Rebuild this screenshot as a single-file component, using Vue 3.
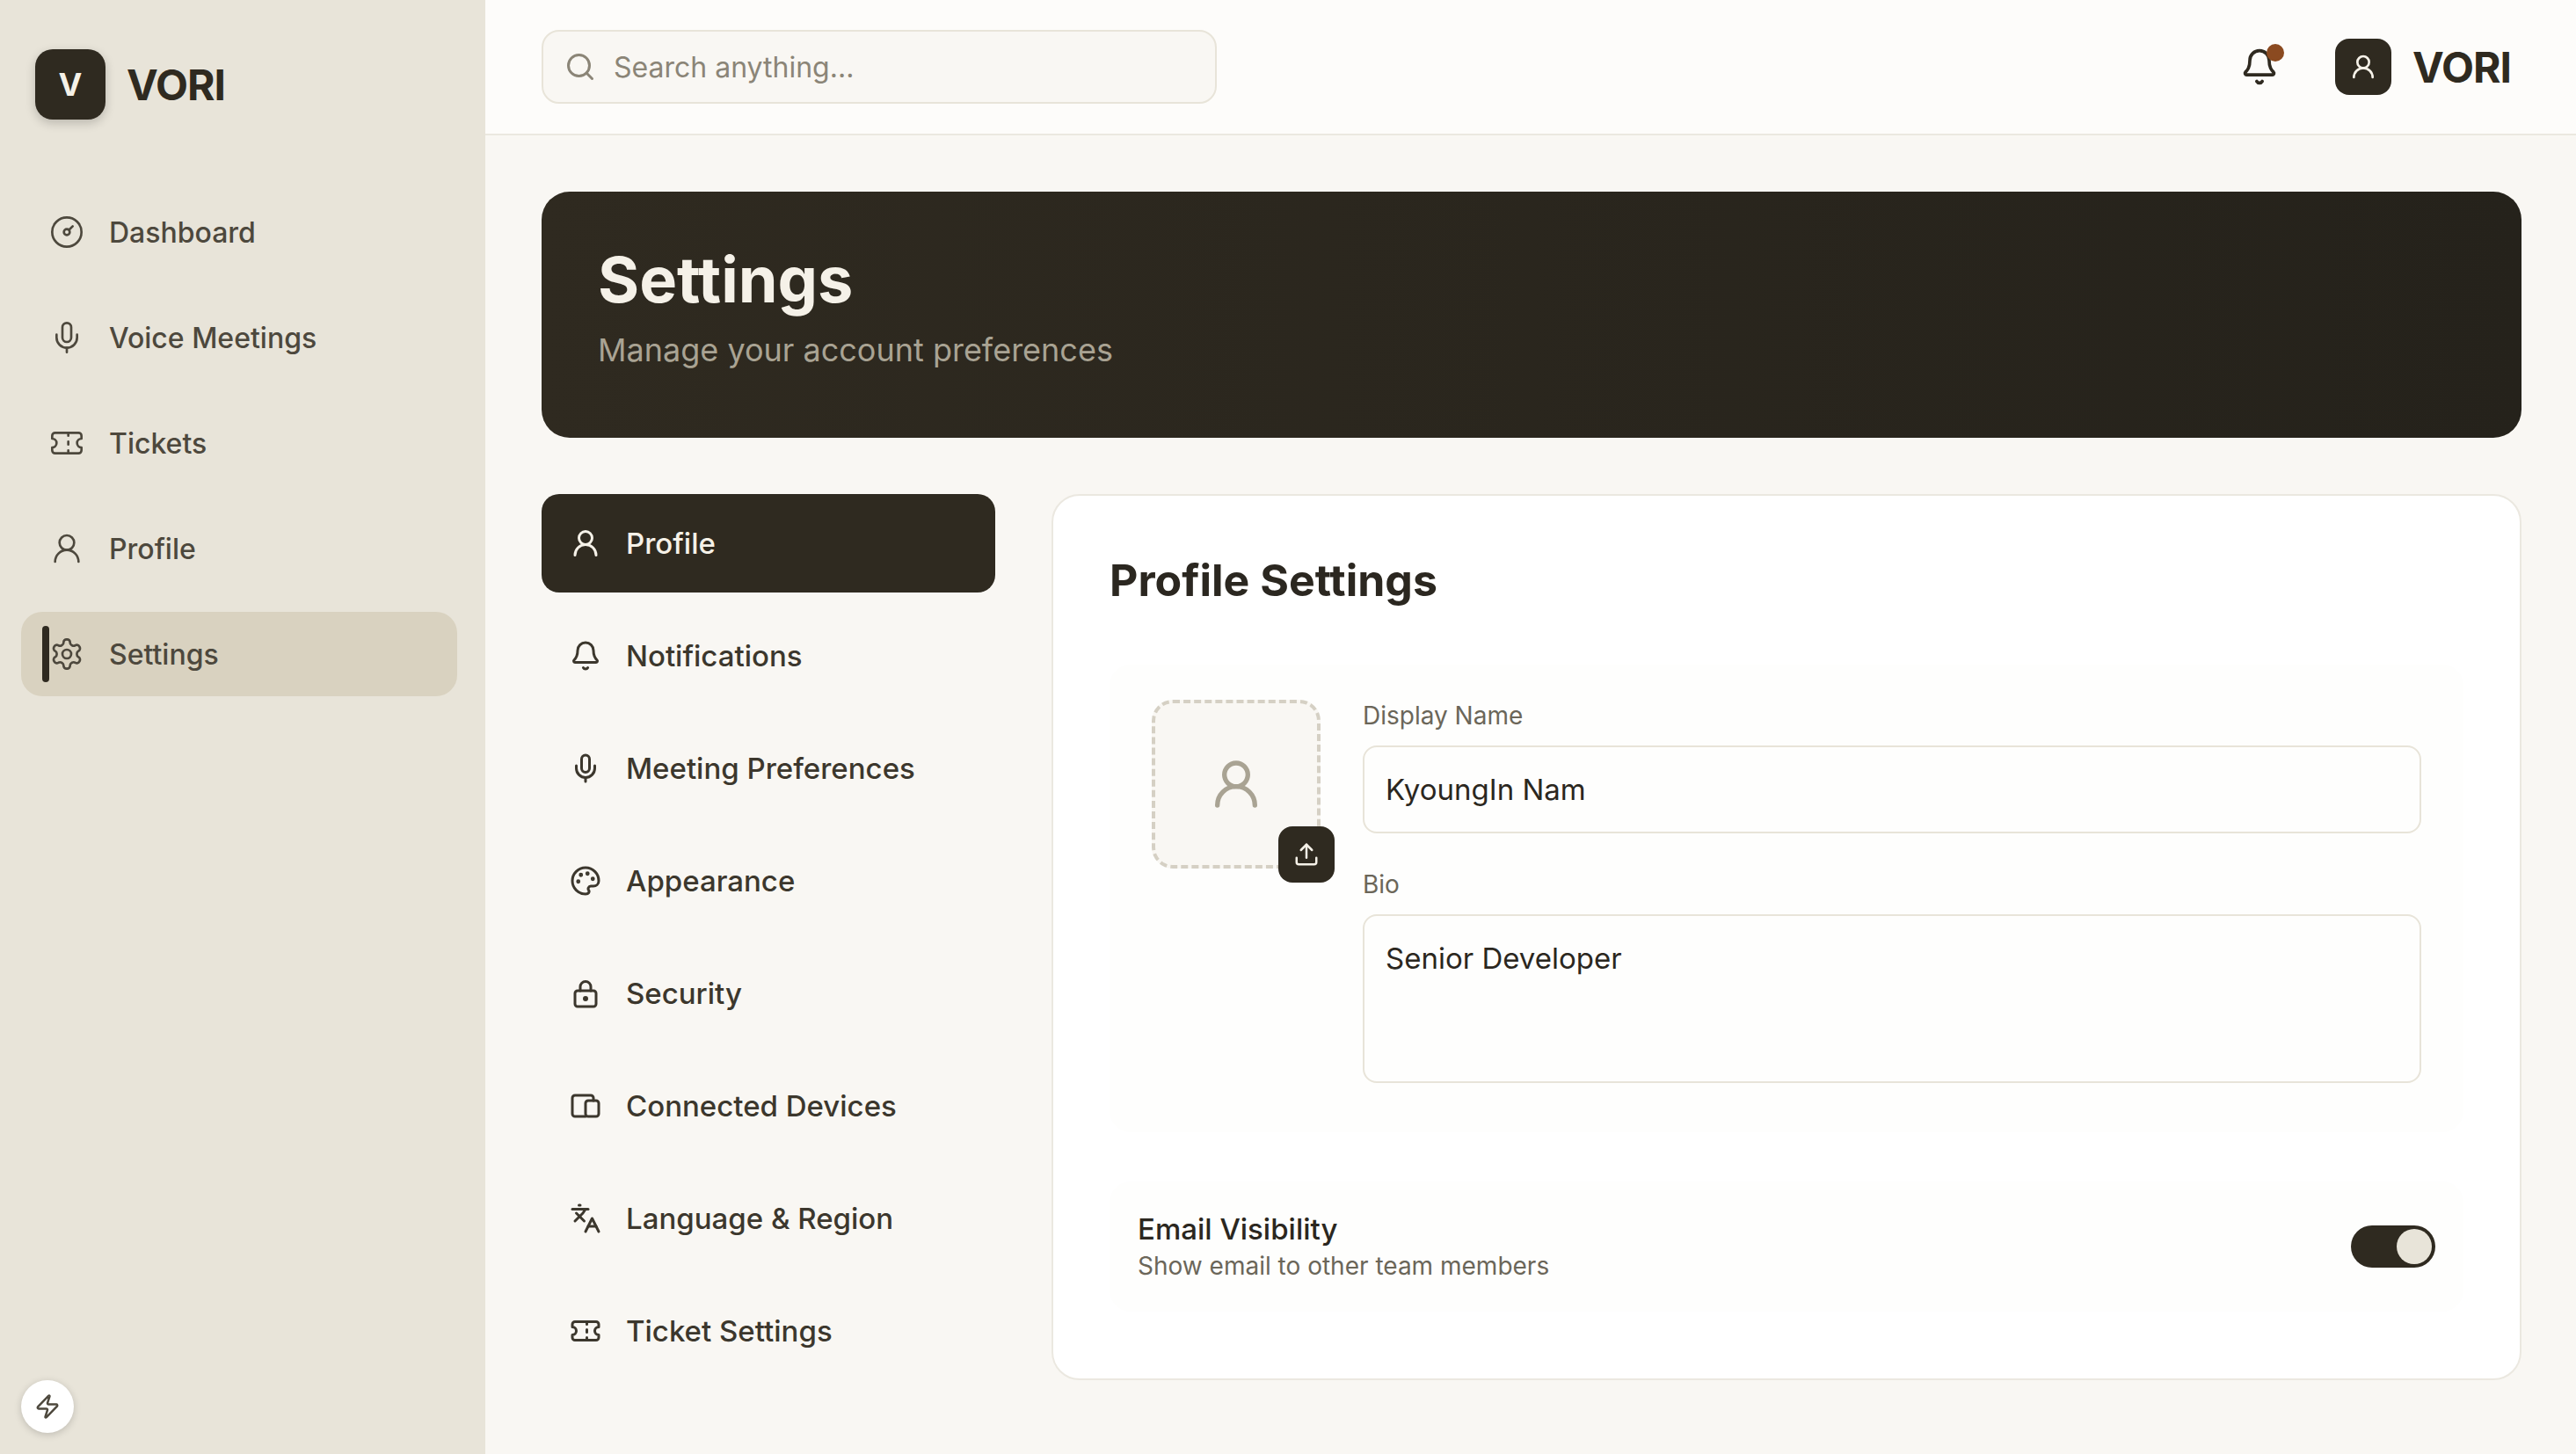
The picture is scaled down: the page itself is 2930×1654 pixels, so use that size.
<template>
  <div class="app">
    <aside class="sidebar">
      <div class="brand">
        <div class="brand-mark">V</div>
        <span class="brand-name">VORI</span>
      </div>
      <nav class="side-nav">
        <a v-for="item in sideItems" :key="item.label" class="side-item" :class="{ active: item.label === 'Settings' }">
          <span v-if="item.label === 'Settings'" class="side-bar"></span>
          <svg class="side-icon" viewBox="0 0 24 24" v-html="icons[item.icon]"></svg>
          <span>{{ item.label }}</span>
        </a>
      </nav>
      <button class="bolt">
        <svg viewBox="0 0 24 24" v-html="icons.bolt"></svg>
      </button>
    </aside>
    <div class="main">
      <header class="topbar">
        <div class="search">
          <svg viewBox="0 0 24 24" v-html="icons.search"></svg>
          <span>Search anything...</span>
        </div>
        <div class="top-right">
          <div class="bell">
            <svg viewBox="0 0 24 24" v-html="icons.bell"></svg>
            <span class="dot"></span>
          </div>
          <div class="user">
            <div class="user-mark"><svg viewBox="0 0 24 24" v-html="icons.user"></svg></div>
            <span>VORI</span>
          </div>
        </div>
      </header>
      <main class="content">
        <section class="hero">
          <h1>Settings</h1>
          <p>Manage your account preferences</p>
        </section>
        <div class="columns">
          <nav class="tabs">
            <a v-for="(tab, i) in tabs" :key="tab.label" class="tab" :class="{ active: i === 0 }">
              <svg viewBox="0 0 24 24" v-html="icons[tab.icon]"></svg>
              <span>{{ tab.label }}</span>
            </a>
          </nav>
          <section class="card">
            <h2>Profile Settings</h2>
            <div class="profile-box">
              <div class="avatar">
                <svg class="avatar-icon" viewBox="0 0 24 24" v-html="icons.user"></svg>
                <button class="upload"><svg viewBox="0 0 24 24" v-html="icons.upload"></svg></button>
              </div>
              <div class="fields">
                <label>Display Name</label>
                <div class="input">KyoungIn Nam</div>
                <label class="bio-label">Bio</label>
                <div class="input textarea">Senior Developer</div>
              </div>
            </div>
            <div class="email-row">
              <div>
                <div class="email-title">Email Visibility</div>
                <div class="email-sub">Show email to other team members</div>
              </div>
              <div class="toggle"><span></span></div>
            </div>
          </section>
        </div>
      </main>
    </div>
  </div>
</template>

<script setup>
const icons = {
  gauge: '<circle cx="12" cy="12" r="10"/><circle cx="12" cy="12" r="2"/><path d="M13.5 10.5 16 8"/>',
  mic: '<path d="M12 2a3 3 0 0 0-3 3v7a3 3 0 0 0 6 0V5a3 3 0 0 0-3-3Z"/><path d="M19 10v2a7 7 0 0 1-14 0v-2"/><path d="M12 19v3"/>',
  ticket: '<path d="M2 9a3 3 0 0 1 0 6v2a2 2 0 0 0 2 2h16a2 2 0 0 0 2-2v-2a3 3 0 0 1 0-6V7a2 2 0 0 0-2-2H4a2 2 0 0 0-2 2Z"/><path d="M13 5v2M13 17v2M13 11v2"/>',
  user: '<circle cx="12" cy="8" r="5"/><path d="M20 21a8 8 0 0 0-16 0"/>',
  gear: '<path d="M12.22 2h-.44a2 2 0 0 0-2 2v.18a2 2 0 0 1-1 1.73l-.43.25a2 2 0 0 1-2 0l-.15-.08a2 2 0 0 0-2.73.73l-.22.38a2 2 0 0 0 .73 2.73l.15.1a2 2 0 0 1 1 1.72v.51a2 2 0 0 1-1 1.74l-.15.09a2 2 0 0 0-.73 2.73l.22.38a2 2 0 0 0 2.73.73l.15-.08a2 2 0 0 1 2 0l.43.25a2 2 0 0 1 1 1.73V20a2 2 0 0 0 2 2h.44a2 2 0 0 0 2-2v-.18a2 2 0 0 1 1-1.73l.43-.25a2 2 0 0 1 2 0l.15.08a2 2 0 0 0 2.73-.73l.22-.39a2 2 0 0 0-.73-2.73l-.15-.08a2 2 0 0 1-1-1.74v-.5a2 2 0 0 1 1-1.74l.15-.09a2 2 0 0 0 .73-2.73l-.22-.38a2 2 0 0 0-2.73-.73l-.15.08a2 2 0 0 1-2 0l-.43-.25a2 2 0 0 1-1-1.73V4a2 2 0 0 0-2-2Z"/><circle cx="12" cy="12" r="3"/>',
  bolt: '<path d="M4 14a1 1 0 0 1-.78-1.63l9.9-10.2a.5.5 0 0 1 .86.46l-1.92 6.02A1 1 0 0 0 13 10h7a1 1 0 0 1 .78 1.63l-9.9 10.2a.5.5 0 0 1-.86-.46l1.92-6.02A1 1 0 0 0 11 14Z"/>',
  search: '<circle cx="11" cy="11" r="8"/><path d="m21 21-4.3-4.3"/>',
  bell: '<path d="M10.27 21a2 2 0 0 0 3.46 0"/><path d="M3.26 15.33A1 1 0 0 0 4 17h16a1 1 0 0 0 .74-1.67C19.41 13.96 18 12.5 18 8A6 6 0 0 0 6 8c0 4.5-1.41 5.96-2.74 7.33"/>',
  palette: '<path d="M12 22a10 10 0 1 1 10-10c0 2.5-2 4-4 4h-2a2 2 0 0 0-1.5 3.3c.5.7.2 2.7-2.5 2.7Z"/><circle cx="13.5" cy="6.5" r=".6" fill="currentColor"/><circle cx="17.5" cy="10.5" r=".6" fill="currentColor"/><circle cx="6.5" cy="12.5" r=".6" fill="currentColor"/><circle cx="8.5" cy="7.5" r=".6" fill="currentColor"/>',
  lock: '<rect x="4" y="10" width="16" height="12" rx="2"/><path d="M8 10V7a4 4 0 0 1 8 0v3"/><circle cx="12" cy="16" r="1" fill="currentColor"/>',
  devices: '<path d="M18 8V6a2 2 0 0 0-2-2H4a2 2 0 0 0-2 2v12a2 2 0 0 0 2 2h8"/><rect x="12" y="8" width="10" height="12" rx="2"/>',
  language: '<path d="m5 8 6 6"/><path d="m4 14 6-6 2-3"/><path d="M2 5h12"/><path d="M7 2h1"/><path d="m22 22-5-10-5 10"/><path d="M14 18h6"/>',
  upload: '<path d="M12 3v12"/><path d="m17 8-5-5-5 5"/><path d="M21 15v4a2 2 0 0 1-2 2H5a2 2 0 0 1-2-2v-4"/>'
}

const sideItems = [
  { label: 'Dashboard', icon: 'gauge' },
  { label: 'Voice Meetings', icon: 'mic' },
  { label: 'Tickets', icon: 'ticket' },
  { label: 'Profile', icon: 'user' },
  { label: 'Settings', icon: 'gear' }
]

const tabs = [
  { label: 'Profile', icon: 'user' },
  { label: 'Notifications', icon: 'bell' },
  { label: 'Meeting Preferences', icon: 'mic' },
  { label: 'Appearance', icon: 'palette' },
  { label: 'Security', icon: 'lock' },
  { label: 'Connected Devices', icon: 'devices' },
  { label: 'Language & Region', icon: 'language' },
  { label: 'Ticket Settings', icon: 'ticket' }
]
</script>

<style>
html, body { margin: 0; background: #f9f7f3; }
</style>

<style scoped>
* { box-sizing: border-box; }
svg { fill: none; stroke: currentColor; stroke-width: 2; stroke-linecap: round; stroke-linejoin: round; display: block; }
.app { display: flex; width: 2930px; height: 1654px; overflow: hidden; font-family: Inter, sans-serif; color: #2b2720; background: #f9f7f3; }
.sidebar { position: relative; width: 552px; flex: none; background: #e8e4d9; padding: 56px 32px 0 24px; }
.brand { display: flex; align-items: center; gap: 24px; padding-left: 16px; height: 80px; }
.brand-mark { width: 80px; height: 80px; border-radius: 20px; background: #2f2a20; color: #f5f1e8; display: flex; align-items: center; justify-content: center; font-size: 36px; font-weight: 700; box-shadow: 0 4px 12px rgba(0,0,0,.2); }
.brand-name { font-size: 48px; font-weight: 700; color: #2f2a20; letter-spacing: -1px; }
.side-nav { margin-top: 80px; display: flex; flex-direction: column; gap: 24px; }
.side-item { position: relative; display: flex; align-items: center; gap: 28px; height: 96px; padding-left: 32px; border-radius: 24px; font-size: 32px; font-weight: 500; color: #4d483d; }
.side-item.active { background: #d9d2c0; }
.side-bar { position: absolute; left: 24px; top: 16px; width: 8px; height: 64px; border-radius: 4px; background: #2f2a20; }
.side-icon { width: 40px; height: 40px; stroke-width: 1.6; }
.bolt { position: absolute; left: 24px; bottom: igno; bottom: 24px; width: 60px; height: 60px; border-radius: 50%; border: 0; padding: 0; background: #fff; color: #4d483d; display: flex; align-items: center; justify-content: center; box-shadow: 0 2px 8px rgba(0,0,0,.18); }
.bolt svg { width: 30px; height: 30px; }
.main { flex: 1; min-width: 0; }
.topbar { height: 154px; background: #fdfcfa; border-bottom: 2px solid #ebe8e0; display: flex; align-items: center; justify-content: space-between; padding: 0 74px 0 64px; }
.search { width: 768px; height: 84px; border: 2px solid #e8e4d9; border-radius: 20px; background: #f9f7f3; display: flex; align-items: center; gap: 20px; padding-left: 24px; font-size: 32px; color: #8b8577; }
.search svg { width: 36px; height: 36px; }
.top-right { display: flex; align-items: center; gap: 64px; }
.bell { position: relative; color: #2f2a20; }
.bell svg { width: 44px; height: 44px; }
.dot { position: absolute; top: -4px; right: -6px; width: 20px; height: 20px; border-radius: 50%; background: #8b4a20; }
.user { display: flex; align-items: center; gap: 24px; font-size: 48px; font-weight: 700; color: #2f2a20; letter-spacing: -1px; }
.user-mark { width: 64px; height: 64px; border-radius: 16px; background: #2f2a20; color: #f5f1e8; display: flex; align-items: center; justify-content: center; }
.user-mark svg { width: 32px; height: 32px; }
.content { padding: 64px 62px 0 64px; }
.hero { height: 280px; border-radius: 32px; background: linear-gradient(90deg, #2f2a20, #25221b); padding: 60px 64px 0; }
.hero h1 { margin: 0; font-size: 72px; line-height: 80px; font-weight: 700; color: #f5f1e8; }
.hero p { margin: 16px 0 0; font-size: 36px; line-height: 48px; color: #a9a393; }
.columns { display: flex; gap: 64px; margin-top: 64px; }
.tabs { width: 516px; flex: none; display: flex; flex-direction: column; gap: 16px; }
.tab { display: flex; align-items: center; gap: 28px; height: 112px; padding-left: 32px; border-radius: 20px; font-size: 33px; font-weight: 500; color: #3c372d; }
.tab svg { width: 36px; height: 36px; }
.tab.active { background: #2f2a20; color: #f5f1e8; }
.card { flex: 1; height: 1008px; background: #fff; border: 2px solid #ebe8e0; border-radius: 32px; padding: 64px; }
.card h2 { margin: 0; font-size: 50px; line-height: 64px; font-weight: 700; color: #2b2720; }
.profile-box { display: flex; gap: 48px; margin-top: 64px; padding: 40px 48px 56px; border-radius: 24px; background: #fefefd; }
.avatar { position: relative; width: 192px; height: 192px; flex: none; border: 4px dashed #d5d0c4; border-radius: 24px; background: #f9f7f3; color: #a9a393; display: flex; align-items: center; justify-content: center; }
.avatar-icon { width: 64px; height: 64px; }
.upload { position: absolute; right: -20px; bottom: -20px; width: 64px; height: 64px; border: 0; border-radius: 16px; padding: 0; background: #2f2a20; color: #f5f1e8; display: flex; align-items: center; justify-content: center; }
.upload svg { width: 30px; height: 30px; }
.fields { flex: 1; min-width: 0; }
.fields label { display: block; font-size: 28px; line-height: 36px; color: #6b6659; margin-bottom: 16px; }
.fields .bio-label { margin-top: 40px; }
.input { height: 100px; border: 2px solid #e8e4d9; border-radius: 16px; padding: 28px 24px; font-size: 33px; line-height: 40px; color: #2b2720; }
.input.textarea { height: 192px; }
.email-row { display: flex; align-items: center; justify-content: space-between; margin-top: 56px; height: 148px; padding: 0 32px; border-radius: 24px; background: #fefefd; }
.email-title { font-size: 33px; line-height: 44px; font-weight: 500; color: #2b2720; }
.email-sub { font-size: 28px; line-height: 40px; color: #6b6659; }
.toggle { width: 96px; height: 48px; border-radius: 24px; background: #2f2a20; position: relative; }
.toggle span { position: absolute; right: 4px; top: 4px; width: 40px; height: 40px; border-radius: 50%; background: #e8e4d9; }
</style>
